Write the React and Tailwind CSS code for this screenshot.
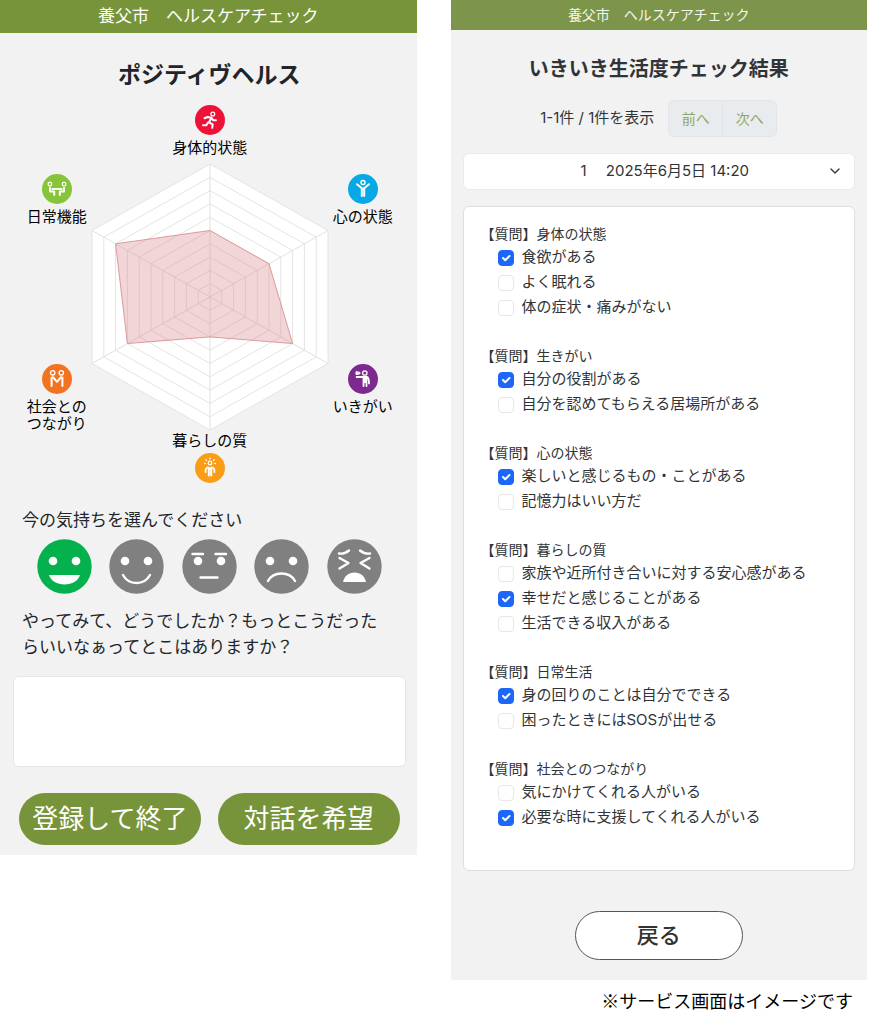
import React, { useState } from 'react';
import { ChevronDown } from 'lucide-react';

const CENTER_X = 119;
const CENTER_Y = 134;

// full-length vectors of the six axes, clockwise from the top
const AXES = [
  [0, -133],
  [118, -66.5],
  [118, 66.5],
  [0, 133],
  [-118, 66.5],
  [-118, -66.5],
];

const SCORES = [5, 5, 7, 3, 7, 8];

const QUESTIONS = [
  {
    title: '身体の状態',
    items: [
      ['食欲がある', true],
      ['よく眠れる', false],
      ['体の症状・痛みがない', false],
    ],
  },
  {
    title: '生きがい',
    items: [
      ['自分の役割がある', true],
      ['自分を認めてもらえる居場所がある', false],
    ],
  },
  {
    title: '心の状態',
    items: [
      ['楽しいと感じるもの・ことがある', true],
      ['記憶力はいい方だ', false],
    ],
  },
  {
    title: '暮らしの質',
    items: [
      ['家族や近所付き合いに対する安心感がある', false],
      ['幸せだと感じることがある', true],
      ['生活できる収入がある', false],
    ],
  },
  {
    title: '日常生活',
    items: [
      ['身の回りのことは自分でできる', true],
      ['困ったときにはSOSが出せる', false],
    ],
  },
  {
    title: '社会とのつながり',
    items: [
      ['気にかけてくれる人がいる', false],
      ['必要な時に支援してくれる人がいる', true],
    ],
  },
];

function points(values) {
  return values
    .map((v, i) => `${CENTER_X + (AXES[i][0] * v) / 10},${CENTER_Y + (AXES[i][1] * v) / 10}`)
    .join(' ');
}

function RadarChart() {
  return (
    <svg width="238" height="268" viewBox="0 0 238 268" className="shrink-0" aria-hidden="true">
      <polygon points={points([10, 10, 10, 10, 10, 10])} fill="#fff" />
      {[1, 2, 3, 4, 5, 6, 7, 8, 9, 10].map((r) => (
        <polygon key={r} points={points([r, r, r, r, r, r])} fill="none" stroke="#e4e4e4" />
      ))}
      {AXES.map(([x, y]) => (
        <line key={`${x},${y}`} x1={CENTER_X} y1={CENTER_Y} x2={CENTER_X + x} y2={CENTER_Y + y} stroke="#e0e0e0" />
      ))}
      <polygon points={points(SCORES)} fill="#d98b8f" fillOpacity="0.36" stroke="#dd9a9c" />
    </svg>
  );
}

function Badge({ color, children }) {
  return (
    <svg
      width="30"
      height="30"
      viewBox="0 0 30 30"
      fill="none"
      stroke="#fff"
      strokeWidth="1.8"
      strokeLinecap="round"
      strokeLinejoin="round"
      aria-hidden="true"
    >
      <circle cx="15" cy="15" r="15" fill={color} stroke="none" />
      {children}
    </svg>
  );
}

function Axis({ label, icon }) {
  return (
    <div className="flex flex-col items-center gap-1">
      {icon}
      <span className="whitespace-pre text-center text-[15px] leading-[17px]">{label}</span>
    </div>
  );
}

const bodyIcon = (
  <Badge color="#ee1238">
    <circle cx="17.8" cy="9" r="1.9" strokeWidth="1.3" />
    <path d="M9.5 13.2l3-1.2 4 .8-2.6 4.6 3.8 2-.5 3.4M16.5 12.8l1.6 2.4h2.8M13 17.6l-1.6 2.6H8" strokeWidth="2" />
  </Badge>
);

const mindIcon = (
  <Badge color="#06a8e6">
    <circle cx="15" cy="8.6" r="2" strokeWidth="1.5" />
    <path d="M9 10.2l4.8 4V22M21 10.2l-4.8 4V22M14 14.4h2" strokeWidth="2" />
  </Badge>
);

const purposeIcon = (
  <Badge color="#7d2a90">
    <circle cx="16.8" cy="9" r="2.2" strokeWidth="1.3" />
    <path d="M8 8v2.6l4-.8V8.800z" fill="#fff" strokeWidth="1" />
    <path d="M8.6 13h10.2c1.8.2 2.2 2 2.2 6.4M15.5 13v9M18.5 14v8" />
    <path d="M15.4 13.4h3.2V19h-3.2z" fill="#fff" stroke="none" />
  </Badge>
);

const lifeIcon = (
  <Badge color="#f99d17">
    <circle cx="15" cy="10" r="1.8" strokeWidth="1.3" />
    <path d="M15 5.2v.5M10.9 6.9l.4.4M19.1 6.9l-.4.4M9.8 10.6h.4M19.8 10.6h.4" strokeWidth="1.5" />
    <path d="M10.500 19c0-3.2.8-4.4 2.6-4.6L15 16l1.9-1.600c1.8.2 2.6 1.4 2.6 4.6" />
    <path d="M13.8 15.5v7M16.2 15.5v7" strokeWidth="2" />
  </Badge>
);

const socialIcon = (
  <Badge color="#f37420">
    <circle cx="10.7" cy="8.8" r="2.2" strokeWidth="1.3" />
    <circle cx="19.3" cy="8.8" r="2.2" strokeWidth="1.3" />
    <path d="M9.6 22v-8.4l1.4-.4 4 4.6 4-4.6 1.4.4V22" strokeWidth="2" />
  </Badge>
);

const dailyIcon = (
  <Badge color="#86c53a">
    <rect x="6.2" y="8.4" width="3.4" height="3.4" rx="1" strokeWidth="1.2" />
    <rect x="20.4" y="8.4" width="3.4" height="3.4" rx="1" strokeWidth="1.2" />
    <path d="M8 14v3.4h4.2V21M22 14v3.4h-4.2V21M10.5 15h9" strokeWidth="2" />
  </Badge>
);

const eyes = (
  <>
    <circle cx="16" cy="22" r="4.3" fill="#fff" stroke="none" />
    <circle cx="39" cy="22" r="4.3" fill="#fff" stroke="none" />
  </>
);

const FACES = [
  {
    name: 'とても良い',
    face: (
      <>
        {eyes}
        <path d="M12 36h31c-2 6-8 9.5-15.5 9.5S14 42 12 36z" fill="#fff" stroke="none" />
      </>
    ),
  },
  {
    name: '良い',
    face: (
      <>
        {eyes}
        <path d="M14 36c3 5.5 8 8 13.5 8S38 41.5 41 36" />
      </>
    ),
  },
  {
    name: 'ふつう',
    face: (
      <>
        {eyes}
        <path d="M10.5 15H21M33.5 15H44M18.5 38.5h17" />
      </>
    ),
  },
  {
    name: '悪い',
    face: (
      <>
        {eyes}
        <path d="M14 42c3-5.5 8-7.5 13.5-7.5S38 36.5 41 42" />
      </>
    ),
  },
  {
    name: 'とても悪い',
    face: (
      <>
        <path d="M12 14.5c4 .5 7-.5 10-3M43 14.5c-4 .5-7-.5-10-3" />
        <path d="M12.5 19l9 5-9 5.500M42.5 19l-9 5 9 5.500" />
        <path d="M16 43c1.500-6 5.500-9.500 11.500-9.500S37.500 37 39 43z" fill="#fff" stroke="none" />
      </>
    ),
  },
];

function MoodPicker() {
  const [mood, setMood] = useState(0);

  return (
    <div className="flex justify-between pr-[13px] pl-[15px]">
      {FACES.map(({ name, face }, i) => (
        <label key={name} className="relative cursor-pointer">
          <input
            type="radio"
            name="mood"
            aria-label={name}
            checked={mood === i}
            onChange={() => setMood(i)}
            className="peer absolute inset-0 appearance-none"
          />
          <svg
            viewBox="0 0 55 55"
            className="size-[55px] text-[#808080] peer-checked:text-[#05b14d]"
            fill="none"
            strokeWidth="2.4"
            strokeLinecap="round"
            strokeLinejoin="round"
          >
            <circle cx="27.5" cy="27.5" r="27.2" fill="currentColor" />
            <g stroke="#fff">{face}</g>
          </svg>
        </label>
      ))}
    </div>
  );
}

function PositiveHealth() {
  return (
    <section className="bg-[#f2f2f2] pb-[10px] text-[#212529]">
      <header className="bg-[#78943a] text-center text-[17px] leading-[33px] text-white">
        養父市　ヘルスケアチェック
      </header>
      <h1 className="mt-[26px] pl-[2px] text-center text-[23px] leading-8 font-bold">ポジティヴヘルス</h1>

      <div className="mt-[14px] flex flex-col items-center pl-[3px] text-black">
        <Axis label="身体的状態" icon={bodyIcon} />
        <div className="mt-[7px] flex gap-1">
          <div className="flex w-[60px] flex-col gap-[139px] pt-[11px]">
            <Axis label="日常機能" icon={dailyIcon} />
            <Axis label={'社会との\nつながり'} icon={socialIcon} />
          </div>
          <RadarChart />
          <div className="flex w-[60px] flex-col gap-[139px] pt-[11px]">
            <Axis label="心の状態" icon={mindIcon} />
            <Axis label="いきがい" icon={purposeIcon} />
          </div>
        </div>
        <span className="mb-1 text-[15px] leading-[17px]">暮らしの質</span>
        {lifeIcon}
      </div>

      <form onSubmit={(e) => e.preventDefault()}>
        <fieldset className="mt-6 px-[22px]">
          <legend className="mb-[6px] text-[17px] leading-[26px]">今の気持ちを選んでください</legend>
          <MoodPicker />
        </fieldset>
        <label htmlFor="comment" className="mt-[14px] block pr-7 pl-[22px] text-[17px] leading-[26px]">
          やってみて、どうでしたか？もっとこうだったらいいなぁってとこはありますか？
        </label>
        <div className="mt-4 pr-[11px] pl-[13px]">
          <textarea
            id="comment"
            className="block h-[91px] w-full resize-none rounded-md border border-[#e3e6e9] bg-white p-2"
          />
        </div>
        <div className="mt-[26px] grid grid-cols-2 gap-[17px] pr-[17px] pl-[19px]">
          <button type="submit" className="rounded-full bg-[#78943a] text-[26px] leading-[52px] text-white">
            登録して終了
          </button>
          <button type="button" className="rounded-full bg-[#78943a] text-[26px] leading-[52px] text-white">
            対話を希望
          </button>
        </div>
      </form>
    </section>
  );
}

function CheckItem({ label, defaultChecked }) {
  return (
    <li>
      <label className="flex h-[25px] items-center gap-2 text-[15px]">
        <span className="relative size-4 shrink-0">
          <input
            type="checkbox"
            defaultChecked={defaultChecked}
            className="peer block size-4 appearance-none rounded-[4px] border border-[#e4e7eb] bg-white checked:border-[#1c66f8] checked:bg-[#1c66f8]"
          />
          <svg
            viewBox="0 0 16 16"
            className="pointer-events-none absolute inset-0 hidden peer-checked:block"
            fill="none"
            stroke="#fff"
            strokeWidth="2"
            strokeLinecap="round"
            strokeLinejoin="round"
          >
            <path d="M5 8l2.2 2.2L11.5 6" />
          </svg>
        </span>
        {label}
      </label>
    </li>
  );
}

function CheckResult() {
  return (
    <section className="bg-[#f2f2f2] pb-5 text-[#303438]">
      <header className="bg-[#7d944b] text-center text-[14px] leading-[30px] text-[#f4f7ec]">
        養父市　ヘルスケアチェック
      </header>
      <h1 className="mt-[25px] text-center text-[20px] leading-7 font-bold">いきいき生活度チェック結果</h1>

      <div className="mt-[17px] flex items-center justify-center gap-[14px] text-[15px]">
        <span>1-1件 / 1件を表示</span>
        <div className="flex rounded-md border border-[#e2e6ea] bg-[#e9ecef] text-[14px] text-[#8fa662]">
          <button type="button" className="w-[54px] border-r border-[#e0e4e9] leading-[35px]">
            前へ
          </button>
          <button type="button" className="w-[53px] leading-[35px]">
            次へ
          </button>
        </div>
      </div>

      <div className="px-3">
        <div className="relative mt-4">
          <select
            aria-label="回答日時"
            className="block h-[37px] w-full appearance-none rounded-md border border-[#e9ebee] bg-white pl-3 text-center text-[15px]"
          >
            <option>{'1\u3000\u00a02025年6月5日 14:20'}</option>
          </select>
          <ChevronDown
            size={16}
            strokeWidth={2}
            className="pointer-events-none absolute top-[10px] right-3 text-[#343a40]"
          />
        </div>

        <div className="mt-4 flex flex-col gap-[25px] rounded-md border border-[#dcdee0] bg-white px-[17px] pt-4 pb-10">
          {QUESTIONS.map(({ title, items }) => (
            <div key={title}>
              <h2 className="text-[14px] leading-[22px]">【質問】{title}</h2>
              <ul className="pl-[17px]">
                {items.map(([label, checked]) => (
                  <CheckItem key={label} label={label} defaultChecked={checked} />
                ))}
              </ul>
            </div>
          ))}
        </div>
      </div>

      <div className="mt-10 flex justify-center">
        <button
          type="button"
          className="w-[168px] rounded-full border border-[#555] bg-white text-[22px] leading-[47px] font-medium text-[#333]"
        >
          戻る
        </button>
      </div>
    </section>
  );
}

function App() {
  return (
    <main className="grid grid-cols-2 items-start gap-[34px] bg-white pr-[18px] font-['Inter','Noto_Sans_CJK_JP',sans-serif]">
      <PositiveHealth />
      <div>
        <CheckResult />
        <p className="mt-1 pr-[14px] text-right font-['Noto_Sans_CJK_JP',sans-serif] text-[18px] leading-8 text-black">
          ※サービス画面はイメージです
        </p>
      </div>
    </main>
  );
}

export default App;
